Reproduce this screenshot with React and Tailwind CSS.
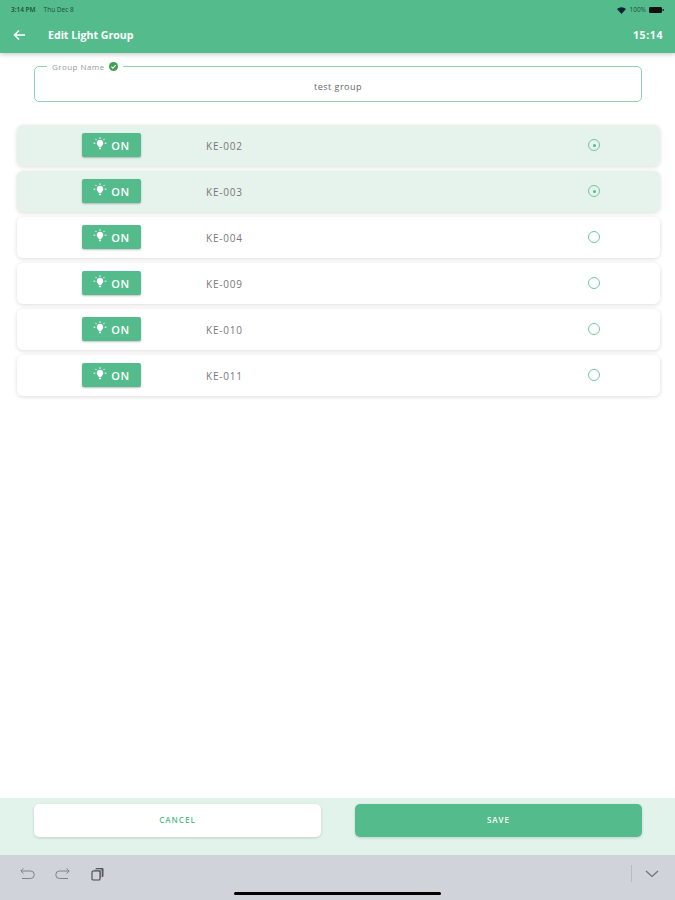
const FONT = "font-['Open_Sans','Noto_Sans',sans-serif]";

function Bulb() {
  return (
    <svg width="14" height="14" viewBox="0 0 14 14" className="block" aria-hidden="true">
      <path d="M7 2.8a3.3 3.3 0 0 0-2 5.9c.5.4.8.9.8 1.4h2.4c0-.5.3-1 .8-1.4a3.3 3.3 0 0 0-2-5.9z" fill="#fff" />
      <rect x="5.9" y="10.6" width="2.2" height="1.6" fill="#fff" />
      <path d="M7 .3v1.6M2.4 1.9l1.2 1.2M11.6 1.9l-1.2 1.2M.6 6.2h1.7M11.7 6.2h1.7" stroke="#fff" strokeWidth="1" fill="none" />
    </svg>
  );
}

function Row({ name, selected }) {
  return (
    <div className={`h-[41px] rounded-md flex items-center shadow-[0_1px_4px_rgba(0,0,0,0.14)] ${selected ? "bg-[#e6f3ec]" : "bg-white"}`}>
      <div className="ml-[65px] w-[59px] h-[24px] -mt-[1px] rounded-[2px] bg-[#54bc8c] shadow-[0_1px_2px_rgba(0,0,0,0.25)] flex items-center justify-center gap-[4px] text-white">
        <span className="-mt-[3px]"><Bulb /></span>
        <span className="text-[11px] font-semibold tracking-[0.6px] leading-none">ON</span>
      </div>
      <div className="ml-[65px] text-[10px] tracking-[0.8px] text-[#777] leading-none">{name}</div>
      <div className="ml-auto mr-[60px] -mt-[1px] w-[12px] h-[12px] rounded-full border-[1.5px] border-[#6fc7a0] flex items-center justify-center">
        {selected && <div className="w-[3px] h-[3px] rounded-full bg-[#54bc8c]" />}
      </div>
    </div>
  );
}

function Field() {
  return (
    <fieldset className="ml-[34px] mr-[33px] mt-[9px] h-[40px] border border-[#8fd0b3] rounded-[5px] pl-[12px] pr-[12px] m-0 flex-none">
      <legend className="px-[5px] flex items-center gap-[4px] text-[8px] tracking-[0.45px] text-[#8f9c96] leading-[9px] h-[9px]">
        Group Name
        <svg width="9" height="9" viewBox="0 0 9 9" aria-hidden="true">
          <circle cx="4.5" cy="4.5" r="4.5" fill="#3f9f4a" />
          <path d="M2.4 4.6l1.5 1.5 2.8-3" stroke="#fff" strokeWidth="1.1" fill="none" />
        </svg>
      </legend>
      <div className="text-center text-[9px] tracking-[0.5px] text-[#666] leading-none mt-[11px]">test group</div>
    </fieldset>
  );
}

export default function App() {
  const rows = [
    ["KE-002", true],
    ["KE-003", true],
    ["KE-004", false],
    ["KE-009", false],
    ["KE-010", false],
    ["KE-011", false],
  ];
  return (
    <div className={`w-[675px] h-[900px] bg-white flex flex-col overflow-hidden ${FONT}`}>
      <header className="h-[53px] flex-none bg-[#54bc8c] shadow-[0_1px_5px_rgba(0,0,0,0.25)] flex flex-col z-10">
        <div className="h-[17px] pt-[3px] pl-[11px] pr-[11px] flex items-center text-[6.5px] text-[#1d4d38] leading-none">
          <span className="font-semibold">3:14 PM</span>
          <span className="ml-[8px]">Thu Dec 8</span>
          <span className="ml-auto flex items-center gap-[3px]">
            <svg width="9" height="7" viewBox="0 0 9 7" aria-hidden="true"><path d="M0 2a6.5 6.5 0 0 1 9 0L4.5 7z" fill="#123" /></svg>
            <span>100%</span>
            <svg width="15" height="6" viewBox="0 0 15 6" aria-hidden="true"><rect width="13" height="6" rx="1.3" fill="#111" /><rect x="13.5" y="2" width="1.5" height="2" fill="#333" /></svg>
          </span>
        </div>
        <div className="flex-1 flex items-center pl-[13px] pr-[12px] text-white">
          <svg width="13" height="12" viewBox="0 0 13 12" aria-hidden="true">
            <path d="M12 6H2M6 1.5L1.5 6 6 10.5" stroke="#fff" strokeWidth="1.6" fill="none" />
          </svg>
          <span className="ml-[22px] text-[10.6px] font-bold leading-none">Edit Light Group</span>
          <span className="ml-auto text-[10.5px] font-bold tracking-[0.6px] leading-none">15:14</span>
        </div>
      </header>

      <main className="flex-1 min-h-0 flex flex-col">
        <Field />
        <div className="mt-[23px] ml-[17px] mr-[15px] flex flex-col gap-[5px]">
          {rows.map(([n, s]) => <Row key={n} name={n} selected={s} />)}
        </div>
      </main>

      <div className="h-[57px] flex-none bg-[#e1f3eb] pl-[34px] pr-[33px] pt-[6px] flex gap-[34px]">
        <button className="flex-1 h-[33px] pb-[1px] rounded-[5px] bg-white shadow-[0_1px_3px_rgba(0,0,0,0.15)] text-[8px] tracking-[1px] text-[#54bc8c] font-semibold">CANCEL</button>
        <button className="flex-1 h-[33px] pb-[1px] rounded-[5px] bg-[#54bc8c] shadow-[0_1px_3px_rgba(0,0,0,0.15)] text-[8px] tracking-[1px] text-white font-semibold">SAVE</button>
      </div>

      <div className="h-[45px] flex-none bg-[#d1d3da] flex flex-col">
        <div className="h-[37px] flex items-center pl-[20px] pr-[16px]">
          <svg width="15" height="14" viewBox="0 0 15 14" aria-hidden="true">
            <path d="M1 4h9.5a3.7 3.7 0 0 1 0 7.5H2M3.5 1.3L.8 4l2.7 2.7" stroke="#80828a" strokeWidth="1" fill="none" />
          </svg>
          <svg width="15" height="14" viewBox="0 0 15 14" aria-hidden="true" className="ml-[20px]">
            <path d="M14 4H4.5a3.7 3.7 0 0 0 0 7.5H13M11.5 1.3L14.2 4l-2.7 2.7" stroke="#80828a" strokeWidth="1" fill="none" />
          </svg>
          <svg width="14" height="14" viewBox="0 0 14 14" aria-hidden="true" className="ml-[21px]">
            <rect x="4.5" y="1" width="8" height="9" rx="1" fill="#55575e" />
            <rect x="2.5" y="2.5" width="8" height="9" rx="1" fill="#8a8c93" stroke="#d1d3da" strokeWidth="0.6" />
            <rect x="1" y="4" width="8" height="9" rx="1" fill="#d1d3da" stroke="#45474d" strokeWidth="1.1" />
          </svg>
          <div className="ml-auto w-px h-[17px] bg-[#b9bbc2]" />
          <svg width="14" height="8" viewBox="0 0 14 8" aria-hidden="true" className="ml-[13px]">
            <path d="M1 1l6 5.5L13 1" stroke="#6f7178" strokeWidth="1.2" fill="none" />
          </svg>
        </div>
        <div className="w-[207px] h-[3px] rounded-full bg-black mx-auto" />
      </div>
    </div>
  );
}
